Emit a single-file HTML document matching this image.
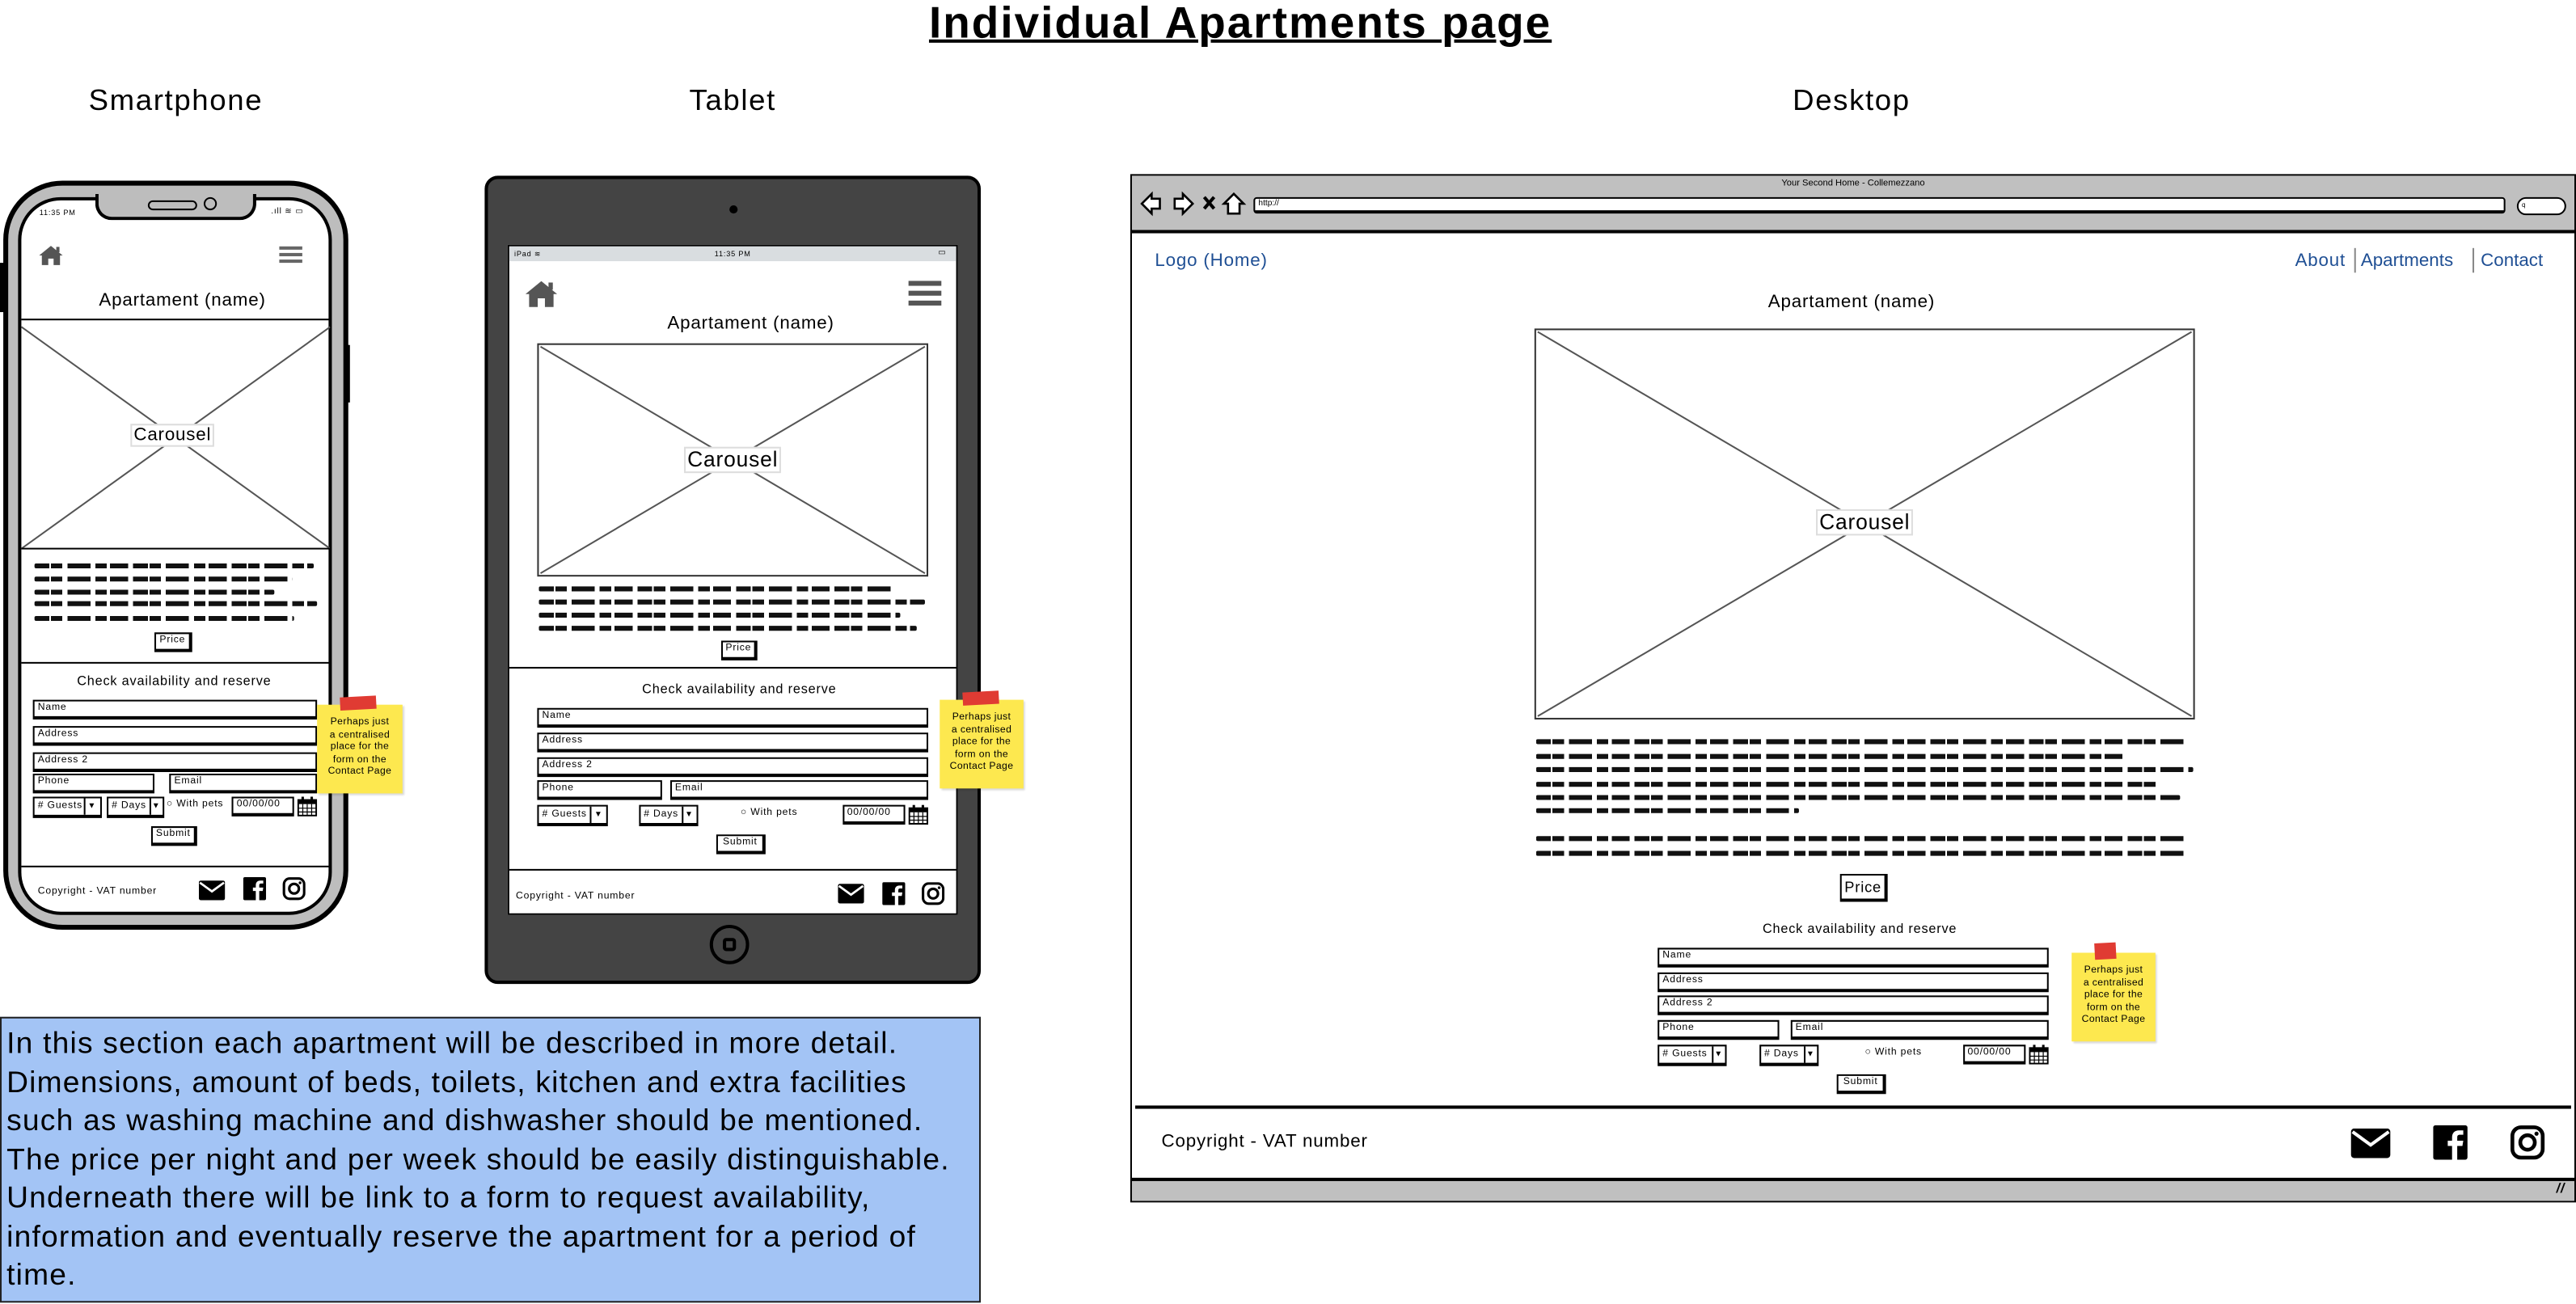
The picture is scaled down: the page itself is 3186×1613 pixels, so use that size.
<!DOCTYPE html>
<html><head><meta charset="utf-8">
<style>
html,body{margin:0;padding:0;background:#fff;}
body{width:3186px;height:1612px;overflow:hidden;position:relative;}
#w{position:absolute;left:0;top:0;width:1568px;height:794px;transform:scale(2.0319);transform-origin:0 0;font-family:"Liberation Sans",sans-serif;color:#000;letter-spacing:.4px;}
.a{position:absolute;}
.t{position:absolute;white-space:nowrap;}
.c{transform:translateX(-50%);}
.fld{position:absolute;border:1px solid #000;border-bottom-width:2px;border-right-width:1.5px;box-sizing:border-box;background:#fff;font-size:6px;line-height:8px;padding-left:2px;overflow:hidden;}
.scr{position:absolute;height:3px;border-radius:1px;background:repeating-linear-gradient(90deg,#111 0 9px,transparent 9px 10px,#111 10px 17px,transparent 17px 20px,#111 20px 34px,transparent 34px 37px,#111 37px 44px,transparent 44px 46px,#111 46px 57px,transparent 57px 60px);}
.btn{position:absolute;border:1px solid #000;border-bottom-width:2px;border-right-width:2px;box-sizing:border-box;background:#fff;text-align:center;}
.sticky{position:absolute;background:#fde84f;box-shadow:1px 1px 1px rgba(0,0,0,.15);text-align:center;font-size:6px;line-height:7.6px;letter-spacing:.2px;}
.sticky .tape{position:absolute;left:14px;top:-5px;width:22px;height:8px;background:#e03b33;transform:rotate(-3deg);}
.form{position:absolute;height:90px;}
</style></head><body>
<svg width="0" height="0" style="position:absolute">
<defs>
<symbol id="mail" viewBox="0 0 24 18"><rect x="0" y="0" width="24" height="18" rx="2" fill="#000"/><path d="M1 2 L12 10 L23 2" stroke="#fff" stroke-width="2" fill="none"/></symbol>
<symbol id="fb" viewBox="0 0 20 20"><rect x="0" y="0" width="20" height="20" rx="1.5" fill="#000"/><path d="M14 20 V12 H17 L17.5 9 H14 V7 C14 6 14.5 5.5 15.5 5.5 H17.5 V3 H15 C12.5 3 11 4.5 11 7 V9 H8.5 V12 H11 V20 Z" fill="#fff"/></symbol>
<symbol id="ig" viewBox="0 0 20 20"><rect x="1.2" y="1.2" width="17.6" height="17.6" rx="5" fill="none" stroke="#000" stroke-width="2.2"/><circle cx="10" cy="10" r="4.2" fill="none" stroke="#000" stroke-width="2.2"/><circle cx="15.2" cy="4.9" r="1.2" fill="#000"/></symbol>
<symbol id="home" viewBox="0 0 24 20"><path d="M12 1 L1 10 L3.5 10 L3.5 19 L9.5 19 L9.5 13 L14.5 13 L14.5 19 L20.5 19 L20.5 10 L23 10 Z" fill="#555"/><rect x="17" y="2" width="3" height="5" fill="#555"/></symbol>
<symbol id="cal" viewBox="0 0 12 12"><rect x="0.5" y="2" width="11" height="9.5" fill="none" stroke="#000" stroke-width="1"/><rect x="0.5" y="2" width="11" height="2.5" fill="#000"/><path d="M0.5 7 H11.5 M0.5 9.3 H11.5 M3.3 4.5 V11.5 M6 4.5 V11.5 M8.7 4.5 V11.5" stroke="#000" stroke-width=".6"/><rect x="2.5" y="0" width="1.5" height="3" fill="#000"/><rect x="8" y="0" width="1.5" height="3" fill="#000"/></symbol>
</defs></svg>
<div id="w">

<!-- Title -->
<div class="t c" style="left:755px;top:-1px;font-size:27px;font-weight:bold;text-decoration:underline;text-decoration-thickness:1.5px;letter-spacing:1px;">Individual Apartments page</div>
<div class="t c" style="left:107px;top:51px;font-size:18px;letter-spacing:.8px;">Smartphone</div>
<div class="t c" style="left:446px;top:51px;font-size:18px;letter-spacing:.8px;">Tablet</div>
<div class="t c" style="left:1127px;top:51px;font-size:18px;letter-spacing:.8px;">Desktop</div>

<!-- ============ PHONE ============ -->
<div class="a" style="left:2px;top:110px;width:210px;height:456px;background:#bdbdbd;border:3px solid #000;border-radius:36px;box-sizing:border-box;"></div>
<div class="a" style="left:0px;top:160px;width:3px;height:30px;background:#000"></div>
<div class="a" style="left:210px;top:210px;width:3px;height:35px;background:#000"></div>
<div class="a" style="left:11px;top:120px;width:191px;height:437px;background:#fff;border:2.5px solid #000;border-radius:26px;box-sizing:border-box;"></div>
<div class="a" style="left:58px;top:118px;width:98px;height:16px;background:#bdbdbd;border:2.5px solid #000;border-top:none;border-radius:0 0 10px 10px;box-sizing:border-box;"></div>
<div class="a" style="left:90px;top:122px;width:28px;height:4px;border:1.5px solid #000;border-radius:3px;"></div>
<div class="a" style="left:124px;top:120px;width:6px;height:6px;border:1.5px solid #000;border-radius:50%;"></div>
<div class="t" style="left:24px;top:127px;font-size:4.5px;">11:35 PM</div>
<div class="t" style="left:165px;top:126px;font-size:5px;">.ıll ≋ ▭</div>
<svg class="a" style="left:23px;top:149px" width="16" height="13"><use href="#home"/></svg>
<div class="a" style="left:170px;top:150px;width:14px;height:2px;background:#666;box-shadow:0 4px 0 #666,0 8px 0 #666"></div>
<div class="t c" style="left:111px;top:177px;font-size:11px;">Apartament (name)</div>
<div class="a" style="left:13px;top:194px;width:188px;height:1px;background:#000"></div>
<svg class="a" style="left:13px;top:197px" width="188" height="139"><path d="M0 2 L188 137 M188 2 L0 137" stroke="#555" stroke-width="1"/><line x1="0" y1="137" x2="188" y2="137" stroke="#000"/></svg>
<div class="t c" style="left:105px;top:258px;font-size:11px;background:#fff;border:1px solid #ddd;padding:0 1px;line-height:12px;">Carousel</div>
<div class="scr" style="left:21px;top:343px;width:170px"></div>
<div class="scr" style="left:21px;top:351px;width:157px"></div>
<div class="scr" style="left:21px;top:359px;width:146px"></div>
<div class="scr" style="left:21px;top:366px;width:172px"></div>
<div class="scr" style="left:21px;top:375px;width:158px"></div>
<div class="btn" style="left:94px;top:385px;width:23px;height:12px;font-size:6px;line-height:9px;">Price</div>
<div class="a" style="left:13px;top:403px;width:188px;height:1px;background:#000"></div>
<div class="t c" style="left:106px;top:410px;font-size:8px;">Check availability and reserve</div>
<div class="form" style="left:20px;top:426px;width:173px;">
 <div class="fld" style="left:0;top:0;width:100%;height:12px;">Name</div>
 <div class="fld" style="left:0;top:16px;width:100%;height:12px;">Address</div>
 <div class="fld" style="left:0;top:32px;width:100%;height:12px;">Address 2</div>
 <div class="fld" style="left:0;top:45px;width:43%;height:12px;">Phone</div>
 <div class="fld" style="left:48%;top:45px;width:52%;height:12px;">Email</div>
 <div class="fld" style="left:0;top:59px;width:24%;height:13px;line-height:10px;">#&nbsp;Guests<span style="position:absolute;right:0;top:0;width:9px;height:100%;border-left:1px solid #000;text-align:center;font-size:5px">▼</span></div>
 <div class="fld" style="left:26%;top:59px;width:20%;height:13px;line-height:10px;"># Days<span style="position:absolute;right:0;top:0;width:7px;height:100%;border-left:1px solid #000;text-align:center;font-size:5px">▼</span></div>
 <div class="t" style="left:47%;top:61px;font-size:6px;">○ With pets</div>
 <div class="fld" style="left:70%;top:59px;width:22%;height:12px;line-height:9px;">00/00/00</div>
 <svg class="a" style="left:161px;top:59px" width="12" height="12"><use href="#cal"/></svg>
 <div class="btn" style="left:72px;top:77px;width:28px;height:12px;font-size:6px;line-height:9px;">Submit</div>
</div>
<div class="a" style="left:13px;top:527px;width:188px;height:1px;background:#000"></div>
<div class="t" style="left:23px;top:540px;font-size:6px;">Copyright - VAT number</div>
<svg class="a" style="left:121px;top:536px" width="16" height="12"><use href="#mail"/></svg>
<svg class="a" style="left:148px;top:534px" width="14" height="14"><use href="#fb"/></svg>
<svg class="a" style="left:172px;top:534px" width="14" height="14"><use href="#ig"/></svg>
<div class="sticky" style="left:193px;top:429px;width:52px;height:54px;padding-top:8px;box-sizing:border-box;"><div class="tape"></div>Perhaps just<br>a centralised<br>place for the<br>form on the<br>Contact Page</div>

<!-- ============ TABLET ============ -->
<div class="a" style="left:295px;top:107px;width:302px;height:492px;background:#444;border:2.5px solid #000;border-radius:8px;box-sizing:border-box;"></div>
<div class="a" style="left:443.5px;top:125px;width:5px;height:5px;border-radius:50%;background:#000"></div>
<div class="a" style="left:432px;top:563px;width:24px;height:24px;border:2.5px solid #000;border-radius:50%;box-sizing:border-box;"></div>
<div class="a" style="left:440px;top:571px;width:8px;height:8px;border:2px solid #000;border-radius:2px;box-sizing:border-box;"></div>
<div class="a" style="left:309px;top:149px;width:274px;height:408px;background:#fff;border:1.5px solid #000;box-sizing:border-box;"></div>
<div class="a" style="left:310px;top:150px;width:272px;height:9px;background:#d9dde0"></div>
<div class="t" style="left:313px;top:152px;font-size:4.5px;">iPad ≋</div>
<div class="t c" style="left:446px;top:152px;font-size:4.5px;">11:35 PM</div>
<div class="t" style="left:571px;top:151px;font-size:5px;">▭</div>
<svg class="a" style="left:319px;top:170px" width="21" height="18"><use href="#home"/></svg>
<div class="a" style="left:553px;top:171px;width:20px;height:2.5px;background:#555;box-shadow:0 6px 0 #555,0 12px 0 #555"></div>
<div class="t c" style="left:457px;top:191px;font-size:11px;">Apartament (name)</div>
<div class="a" style="left:327px;top:209px;width:238px;height:142px;border:1.5px solid #333;box-sizing:border-box;"></div>
<svg class="a" style="left:327px;top:209px" width="238" height="142"><path d="M2 2 L236 140 M236 2 L2 140" stroke="#555" stroke-width="1"/></svg>
<div class="t c" style="left:446px;top:272px;font-size:13px;background:#fff;border:1px solid #ddd;padding:0 1px;line-height:14px;">Carousel</div>
<div class="scr" style="left:328px;top:357px;width:215px"></div>
<div class="scr" style="left:328px;top:365px;width:235px"></div>
<div class="scr" style="left:328px;top:373px;width:220px"></div>
<div class="scr" style="left:328px;top:381px;width:230px"></div>
<div class="btn" style="left:439px;top:390px;width:22px;height:12px;font-size:6px;line-height:9px;">Price</div>
<div class="a" style="left:310px;top:406px;width:272px;height:1px;background:#000"></div>
<div class="t c" style="left:450px;top:415px;font-size:8px;">Check availability and reserve</div>
<div class="form" style="left:327px;top:431px;width:238px;">
 <div class="fld" style="left:0;top:0;width:100%;height:12px;">Name</div>
 <div class="fld" style="left:0;top:15px;width:100%;height:12px;">Address</div>
 <div class="fld" style="left:0;top:30px;width:100%;height:12px;">Address 2</div>
 <div class="fld" style="left:0;top:44px;width:32%;height:12px;">Phone</div>
 <div class="fld" style="left:34%;top:44px;width:66%;height:12px;">Email</div>
 <div class="fld" style="left:0;top:59px;width:18%;height:13px;line-height:10px;">#&nbsp;Guests<span style="position:absolute;right:0;top:0;width:9px;height:100%;border-left:1px solid #000;text-align:center;font-size:5px">▼</span></div>
 <div class="fld" style="left:26%;top:59px;width:15%;height:13px;line-height:10px;"># Days<span style="position:absolute;right:0;top:0;width:8px;height:100%;border-left:1px solid #000;text-align:center;font-size:5px">▼</span></div>
 <div class="t" style="left:52%;top:61px;font-size:6px;">○ With pets</div>
 <div class="fld" style="left:78%;top:59px;width:16%;height:12px;line-height:9px;">00/00/00</div>
 <svg class="a" style="left:226px;top:59px" width="12" height="12"><use href="#cal"/></svg>
 <div class="btn" style="left:109px;top:77px;width:30px;height:12px;font-size:6px;line-height:9px;">Submit</div>
</div>
<div class="a" style="left:310px;top:529px;width:272px;height:1px;background:#000"></div>
<div class="t" style="left:314px;top:543px;font-size:6px;">Copyright - VAT number</div>
<svg class="a" style="left:510px;top:538px" width="16" height="12"><use href="#mail"/></svg>
<svg class="a" style="left:537px;top:537px" width="14" height="14"><use href="#fb"/></svg>
<svg class="a" style="left:561px;top:537px" width="14" height="14"><use href="#ig"/></svg>
<div class="sticky" style="left:572px;top:426px;width:51px;height:54px;padding-top:8px;box-sizing:border-box;"><div class="tape"></div>Perhaps just<br>a centralised<br>place for the<br>form on the<br>Contact Page</div>

<!-- ============ DESKTOP ============ -->
<div class="a" style="left:688px;top:106px;width:880px;height:626px;border:1.5px solid #000;box-sizing:border-box;background:#fff;"></div>
<div class="a" style="left:689px;top:107px;width:878px;height:33px;background:#c0c0c0;border-bottom:2px solid #000;"></div>
<div class="t c" style="left:1128px;top:109px;font-size:5.5px;letter-spacing:0;">Your Second Home - Collemezzano</div>
<svg class="a" style="left:694px;top:116px" width="66" height="16" viewBox="0 0 66 16">
 <path d="M1 8 L7 2 V5 H12 V11 H7 V14 Z" fill="#fff" stroke="#000" stroke-width="1.3"/>
 <path d="M32 8 L26 2 V5 H21 V11 H26 V14 Z" fill="#fff" stroke="#000" stroke-width="1.3"/>
 <path d="M39 4 L45 11 M45 4 L39 11" stroke="#000" stroke-width="2"/>
 <path d="M57 2 L51 8 H53.5 V14 H60.5 V8 H63 Z" fill="#fff" stroke="#000" stroke-width="1.3"/>
</svg>
<div class="a" style="left:763px;top:120px;width:762px;height:10px;background:#fff;border:1.5px solid #000;border-bottom-width:2px;border-radius:2px;box-sizing:border-box;font-size:5px;line-height:7px;padding-left:2px;letter-spacing:0;">http://</div>
<div class="a" style="left:1532px;top:120px;width:30px;height:11px;background:#fff;border:1.5px solid #000;border-radius:6px;box-sizing:border-box;font-size:4px;line-height:8px;padding-left:2px;">q</div>
<div class="t" style="left:703px;top:153px;font-size:11px;color:#1f4f94;">Logo (Home)</div>
<div class="t" style="left:1397px;top:153px;font-size:11px;color:#1f4f94;">About</div>
<div class="a" style="left:1433px;top:151px;width:1px;height:15px;background:#888"></div>
<div class="t" style="left:1437px;top:153px;font-size:11px;color:#1f4f94;letter-spacing:0;">Apartments</div>
<div class="a" style="left:1505px;top:151px;width:1px;height:15px;background:#888"></div>
<div class="t" style="left:1510px;top:153px;font-size:11px;color:#1f4f94;letter-spacing:0;">Contact</div>
<div class="t c" style="left:1127px;top:178px;font-size:11px;">Apartament (name)</div>
<div class="a" style="left:934px;top:200px;width:402px;height:238px;border:1.5px solid #333;box-sizing:border-box;"></div>
<svg class="a" style="left:934px;top:200px" width="402" height="238"><path d="M2 2 L400 236 M400 2 L2 236" stroke="#555" stroke-width="1"/></svg>
<div class="t c" style="left:1135px;top:310px;font-size:13px;background:#fff;border:1px solid #ddd;padding:0 1px;line-height:14px;">Carousel</div>
<div class="scr" style="left:935px;top:450px;width:395px"></div>
<div class="scr" style="left:935px;top:459px;width:360px"></div>
<div class="scr" style="left:935px;top:467px;width:400px"></div>
<div class="scr" style="left:935px;top:476px;width:380px"></div>
<div class="scr" style="left:935px;top:484px;width:392px"></div>
<div class="scr" style="left:935px;top:492px;width:160px"></div>
<div class="scr" style="left:935px;top:509px;width:395px"></div>
<div class="scr" style="left:935px;top:518px;width:395px"></div>
<div class="btn" style="left:1120px;top:532px;width:29px;height:17px;font-size:9px;line-height:14px;">Price</div>
<div class="t c" style="left:1132px;top:561px;font-size:8px;">Check availability and reserve</div>
<div class="form" style="left:1009px;top:577px;width:238px;">
 <div class="fld" style="left:0;top:0;width:100%;height:12px;">Name</div>
 <div class="fld" style="left:0;top:15px;width:100%;height:12px;">Address</div>
 <div class="fld" style="left:0;top:29px;width:100%;height:12px;">Address 2</div>
 <div class="fld" style="left:0;top:44px;width:31%;height:12px;">Phone</div>
 <div class="fld" style="left:34%;top:44px;width:66%;height:12px;">Email</div>
 <div class="fld" style="left:0;top:59px;width:17.5%;height:13px;line-height:10px;">#&nbsp;Guests<span style="position:absolute;right:0;top:0;width:7px;height:100%;border-left:1px solid #000;text-align:center;font-size:5px">▼</span></div>
 <div class="fld" style="left:26%;top:59px;width:15%;height:13px;line-height:10px;"># Days<span style="position:absolute;right:0;top:0;width:7px;height:100%;border-left:1px solid #000;text-align:center;font-size:5px">▼</span></div>
 <div class="t" style="left:53%;top:61px;font-size:6px;">○ With pets</div>
 <div class="fld" style="left:78%;top:59px;width:16%;height:12px;line-height:9px;">00/00/00</div>
 <svg class="a" style="left:226px;top:59px" width="12" height="12"><use href="#cal"/></svg>
 <div class="btn" style="left:109px;top:77px;width:30px;height:12px;font-size:6px;line-height:9px;">Submit</div>
</div>
<div class="sticky" style="left:1261px;top:580px;width:51px;height:54px;padding-top:8px;box-sizing:border-box;"><div class="tape" style="left:14px;top:-6px;width:13px;height:10px;"></div>Perhaps just<br>a centralised<br>place for the<br>form on the<br>Contact Page</div>
<div class="a" style="left:691px;top:673px;width:874px;height:1.5px;background:#000"></div>
<div class="t" style="left:707px;top:689px;font-size:11px;">Copyright - VAT number</div>
<svg class="a" style="left:1431px;top:687px" width="24" height="18"><use href="#mail"/></svg>
<svg class="a" style="left:1481px;top:685px" width="21" height="21"><use href="#fb"/></svg>
<svg class="a" style="left:1528px;top:685px" width="21" height="21"><use href="#ig"/></svg>
<div class="a" style="left:689px;top:717px;width:878px;height:14px;background:#c0c0c0;border-top:2px solid #000;box-sizing:border-box;"></div>
<div class="t" style="left:1556px;top:719px;font-size:8px;font-style:italic;font-weight:bold;">//</div>

<!-- ============ NOTE BOX ============ -->
<div class="a" style="left:0px;top:619px;width:597px;height:174px;background:#a3c4f5;border:1.5px solid #222;box-sizing:border-box;padding:3px 0 0 3px;font-size:18.3px;line-height:23.5px;letter-spacing:.6px;white-space:nowrap;">In this section each apartment will be described in more detail.<br>Dimensions, amount of beds, toilets, kitchen and extra facilities<br>such as washing machine and dishwasher should be mentioned.<br>The price per night and per week should be easily distinguishable.<br>Underneath there will be link to a form to request availability,<br>information and eventually reserve the apartment for a period of<br>time.</div>

</div>
</body></html>
